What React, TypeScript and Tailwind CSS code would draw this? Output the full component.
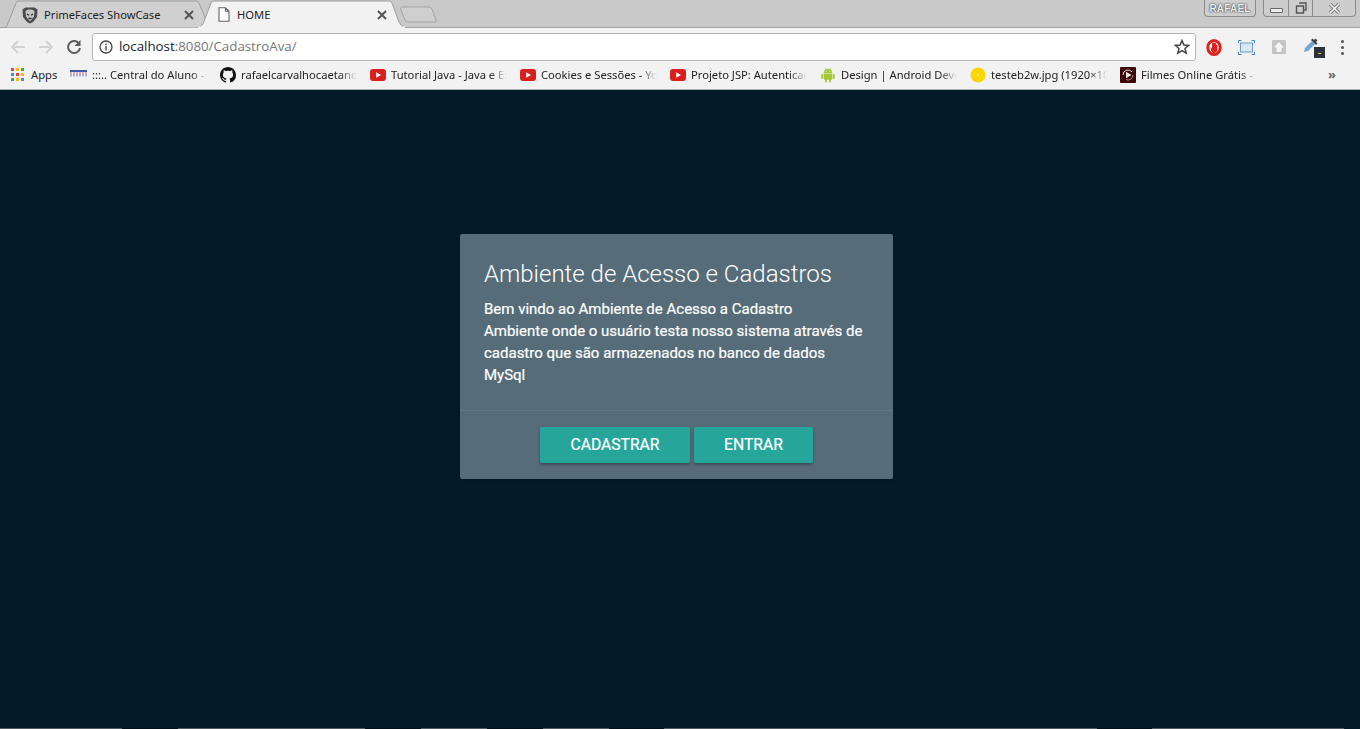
import React from "react";

const YT = () => (
  <svg width="16" height="12" viewBox="0 0 16 12" className="shrink-0">
    <rect x="0" y="0" width="16" height="12" rx="3" fill="#d9201f" />
    <path d="M6.2 3.2 L11 6 L6.2 8.8 Z" fill="#fff" />
  </svg>
);
const GH = () => (
  <svg width="16" height="16" viewBox="0 0 16 16" className="shrink-0">
    <path
      fill="#111"
      d="M8 0C3.58 0 0 3.58 0 8c0 3.54 2.29 6.53 5.47 7.59.4.07.55-.17.55-.38 0-.19-.01-.82-.01-1.49-2.01.37-2.53-.49-2.69-.94-.09-.23-.48-.94-.82-1.13-.28-.15-.68-.52-.01-.53.63-.01 1.08.58 1.23.82.72 1.21 1.87.87 2.33.66.07-.52.28-.87.51-1.07-1.78-.2-3.64-.89-3.64-3.95 0-.87.31-1.59.82-2.15-.08-.2-.36-1.02.08-2.12 0 0 .67-.21 2.2.82.64-.18 1.32-.27 2-.27s1.36.09 2 .27c1.53-1.04 2.2-.82 2.2-.82.44 1.1.16 1.92.08 2.12.51.56.82 1.27.82 2.15 0 3.07-1.87 3.75-3.65 3.95.29.25.54.73.54 1.48 0 1.07-.01 1.93-.01 2.2 0 .21.15.46.55.38A8.01 8.01 0 0 0 16 8c0-4.42-3.58-8-8-8z"
    />
  </svg>
);
const Android = () => (
  <svg width="16" height="16" viewBox="0 0 16 16" className="shrink-0">
    <g fill="#a4c639">
      <path d="M3.6 6.2a4.4 4.4 0 0 1 8.8 0z" />
      <rect x="3.6" y="6.8" width="8.8" height="6" rx="0.8" />
      <rect x="1.2" y="6.8" width="1.8" height="5" rx="0.9" />
      <rect x="13" y="6.8" width="1.8" height="5" rx="0.9" />
      <rect x="5" y="11.5" width="1.9" height="4" rx="0.9" />
      <rect x="9.1" y="11.5" width="1.9" height="4" rx="0.9" />
      <path d="M5 .6 6.4 2.6M11 .6 9.6 2.6" stroke="#a4c639" strokeWidth="0.7" />
    </g>
    <circle cx="6.2" cy="4.2" r="0.5" fill="#fff" />
    <circle cx="9.8" cy="4.2" r="0.5" fill="#fff" />
  </svg>
);
const Yellow = () => (
  <svg width="16" height="16" viewBox="0 0 16 16" className="shrink-0">
    <circle cx="8" cy="8" r="7.5" fill="#ffd500" />
    <circle cx="8" cy="8" r="1" fill="#fff3a0" />
  </svg>
);
const Film = () => (
  <svg width="16" height="16" viewBox="0 0 16 16" className="shrink-0">
    <rect width="16" height="16" rx="1" fill="#3c0508" />
    <path d="M3 8a5 5 0 0 1 9-3" stroke="#f0e4e0" strokeWidth="1" fill="none" />
    <path d="M13 8a5 5 0 0 1-7 4.6" stroke="#b88" strokeWidth="1" fill="none" />
    <path d="M6 4.8 11.5 8 6 11.2Z" fill="#f5ecea" />
  </svg>
);
const Flag = () => (
  <svg width="17" height="9" viewBox="0 0 17 9" className="shrink-0 self-start mt-[3px]">
    <rect width="17" height="2" fill="#3b5ca8" />
    <path d="M0 3h17M0 5h17" stroke="#c9475a" strokeDasharray="2 1" strokeWidth="1" opacity="0.8" />
    <path d="M0 4h17M0 6h17" stroke="#8da0d4" strokeDasharray="2 1" strokeWidth="1" opacity="0.7" />
  </svg>
);

const bookmarks: { icon: React.ReactNode; text: string }[] = [
  { icon: <Flag />, text: ":::.. Central do Aluno - Universidade" },
  { icon: <GH />, text: "rafaelcarvalhocaetano" },
  { icon: <YT />, text: "Tutorial Java - Java e Ext" },
  { icon: <YT />, text: "Cookies e Sessões - YouTube" },
  { icon: <YT />, text: "Projeto JSP: Autenticação" },
  { icon: <Android />, text: "Design | Android Developers" },
  { icon: <Yellow />, text: "testeb2w.jpg (1920×1080)" },
  { icon: <Film />, text: "Filmes Online Grátis - Assistir" },
];

const segs = [
  "w-[122px] bg-[#4f5a62]",
  "w-[56px] bg-[#03101a]",
  "w-[187px] bg-[#4f5a62]",
  "w-[56px] bg-[#03101a]",
  "w-[66px] bg-[#4f5a62]",
  "w-[56px] bg-[#03101a]",
  "w-[66px] bg-[#4f5a62]",
  "w-[55px] bg-[#03101a]",
  "w-[433px] bg-[#4f5a62]",
  "w-[55px] bg-[#03101a]",
  "w-[192px] bg-[#4f5a62]",
];

const CloseX = () => (
  <svg width="10" height="10" viewBox="0 0 10 10" className="shrink-0">
    <path d="M1 1 9 9M9 1 1 9" stroke="#555" strokeWidth="2" />
  </svg>
);

const Shield = () => (
  <svg width="16" height="17" viewBox="0 0 16 17" className="shrink-0">
    <path d="M.5 2.500 3.500 .5h9l3 2-.5 7.500L11 15l-3 1.500L5 15 1 10z" fill="#4a4a4a" />
    <path d="M3.500 4 6 2.500h4L12.500 4l-.5 5.500L8 14.500 4 9.500z" fill="#c4c4c4" />
    <path d="M5 7 7 8.300M11 7 9 8.300M6.500 11.500h3" stroke="#333" strokeWidth="1.300" />
  </svg>
);
const PageIcon = () => (
  <svg width="12" height="15" viewBox="0 0 12 15" className="shrink-0">
    <path d="M1 .8h6.500L11 4.300V14.200H1z M7.500 .8V4.300H11" fill="#fff" stroke="#5f6368" strokeWidth="1.100" />
  </svg>
);

export default function App() {
  return (
    <div className="flex flex-col h-screen w-full overflow-hidden bg-[#031b29] font-['Noto_Sans','Open_Sans',sans-serif]">
      {/* Tab strip */}
      <div className="relative h-[28px] shrink-0 bg-[#c9c9c9] flex items-center text-[11.2px] text-[#222]">
        <svg className="absolute left-0 top-0" width="1360" height="28" viewBox="0 0 1360 28">
          <path d="M0 27.500H1360" stroke="#a3a3a3" />
          <path d="M6 28 16 3Q17 1 19 1H196Q198 1 199 3L206 20 211 28Z" fill="#d0d0d0" stroke="#9d9d9d" />
          <path d="M402 7H429Q431 7 432 9L436 20Q437 22 434 22H408Q406 22 405 20L401 10Q400 7 402 7Z" fill="#cfcfcf" stroke="#a3a3a3" />
          <path d="M197 28Q201 27 203 24L211 3Q212 1 214 1H389Q391 1 392 3L399 22Q401 27 406 28Z" fill="#f2f2f2" stroke="#9d9d9d" />
          <path d="M198 27.500H405" stroke="#f2f2f2" strokeWidth="2" />
        </svg>
        <div className="relative flex items-center w-[172px] ml-[22px] mt-[2px]">
          <Shield />
          <span className="ml-[6px] flex-1">PrimeFaces ShowCase</span>
          <CloseX />
        </div>
        <div className="relative flex items-center w-[169px] ml-[24px] mt-[2px]">
          <PageIcon />
          <span className="ml-[7px] flex-1">HOME</span>
          <CloseX />
        </div>
        <div className="relative ml-auto self-start flex mr-[4px] h-[17px]">
          <div className="w-[52px] h-[17px] rounded-b-[4px] border border-t-0 border-[#8c8c8c] bg-[#cdcdcd] flex items-center justify-center text-[10px] font-bold tracking-[0.2px] text-[#f0f0f0] [text-shadow:0_0_1px_#222,0_0_2px_#444] font-['Liberation_Sans',sans-serif]">
            RAFAEL
          </div>
          <div className="ml-[7px] w-[93px] h-[17px] rounded-b-[4px] border border-t-0 border-[#8c8c8c] bg-[#cdcdcd] flex">
            <div className="w-[25px] flex items-center justify-center border-r border-[#8c8c8c]">
              <div className="w-[13px] h-[5px] mt-[5px] rounded-[1px] border border-[#666] bg-[#eee]" />
            </div>
            <div className="w-[24px] flex items-center justify-center border-r border-[#8c8c8c]">
              <svg width="12" height="12" viewBox="0 0 12 12">
                <path d="M4 1h7v7H8.500M1.500 4h7v7h-7z" fill="none" stroke="#555" strokeWidth="1.400" />
              </svg>
            </div>
            <div className="flex-1 flex items-center justify-center">
              <svg width="13" height="11" viewBox="0 0 13 11">
                <path d="M2 1 11 10M11 1 2 10" stroke="#777" strokeWidth="3.400" />
                <path d="M2 1 11 10M11 1 2 10" stroke="#f5f5f5" strokeWidth="1.600" />
              </svg>
            </div>
          </div>
        </div>
      </div>

      {/* Toolbar */}
      <div className="h-[34px] shrink-0 bg-[#f2f2f2] flex items-center pt-[4px]">
        <div className="w-[92px] shrink-0 flex items-center pl-[10px]">
          <svg width="16" height="16" viewBox="0 0 16 16">
            <path d="M15 8H2M8 2 2 8l6 6" fill="none" stroke="#d3d3d3" strokeWidth="2" />
          </svg>
          <svg width="16" height="16" viewBox="0 0 16 16" className="ml-[12px]">
            <path d="M1 8h13M8 2l6 6-6 6" fill="none" stroke="#d3d3d3" strokeWidth="2" />
          </svg>
          <svg width="16" height="16" viewBox="0 0 16 16" className="ml-[12px]">
            <path d="M13.300 5A6 6 0 1 0 14 9" fill="none" stroke="#5a5a5a" strokeWidth="2" />
            <path d="M14.500 1v6h-6z" fill="#5a5a5a" />
          </svg>
        </div>
        <div className="w-[1104px] h-[28px] shrink-0 bg-white border border-[#b5b5b5] rounded-[3px] flex items-center pl-[6px] pr-[5px]">
          <svg width="14" height="14" viewBox="0 0 14 14" className="shrink-0">
            <circle cx="7" cy="7" r="6" fill="none" stroke="#444" strokeWidth="1.300" />
            <rect x="6.300" y="6" width="1.400" height="4.500" fill="#444" />
            <rect x="6.300" y="3.500" width="1.400" height="1.500" fill="#444" />
          </svg>
          <span className="ml-[6px] text-[13.3px] leading-none text-[#222] font-['Open_Sans',sans-serif]">
            localhost<span className="text-[#777]">:8080/CadastroAva/</span>
          </span>
          <svg width="16" height="16" viewBox="0 0 16 16" className="ml-auto">
            <path d="M8 1.500 9.900 6l4.800.4-3.700 3.100 1.200 4.700L8 11.700l-4.200 2.500L5 9.500 1.300 6.400 6.100 6z" fill="none" stroke="#444" strokeWidth="1.500" />
          </svg>
        </div>
        <div className="flex-1 flex items-center">
          <svg width="16" height="17" viewBox="0 0 16 17" className="ml-[10px]">
            <ellipse cx="8" cy="8.500" rx="6.200" ry="7" fill="#fff" stroke="#e0201c" strokeWidth="3" />
            <path d="M4.500 8 6 9.500V4.500c0-1 1-1 1 0 0-1.300 1.500-1.300 1.500 0 0-1 1.500-1 1.500 0V6c0-.8 1.300-.8 1.300 0v4.500c0 2-1.500 3.500-3.300 3.500S6 13 5 11.500z" fill="#e0201c" />
          </svg>
          <svg width="17" height="15" viewBox="0 0 17 15" className="ml-[16px]">
            <rect x="2.500" y="3" width="12" height="9" fill="#dbe7f3" stroke="#6c9bcb" />
            <path d="M.5 3V.5H3.500M13.500.5H16.500V3M.5 12V14.500H3.500M13.500 14.500H16.500V12" fill="none" stroke="#3d86c6" />
          </svg>
          <svg width="14" height="14" viewBox="0 0 14 14" className="ml-[17px]">
            <rect width="14" height="14" rx="1" fill="#c4c4c4" />
            <path d="M7 2 12 7.500H9.500V12h-5V7.500H2z" fill="#f5f5f5" />
          </svg>
          <div className="relative ml-[17px] w-[22px] h-[21px] shrink-0">
            <svg width="16" height="16" viewBox="0 0 16 16" className="absolute left-0 top-0">
              <path d="M1 15 2 11 9 4l3 3-7 7z" fill="#6aa8d8" />
              <path d="M8 3l5 5 1.500-1.500L13 5l1.500-1.500-2-2L11 3 9.500 1.500z" fill="#444" />
            </svg>
            <div className="absolute left-[11px] top-[10px] w-[11px] h-[11px] bg-[#2b3238] flex items-center justify-center">
              <div className="w-[3px] h-[1px] mt-[2px] bg-[#d7c060]" />
            </div>
          </div>
          <div className="ml-[16px] flex flex-col gap-[3px]">
            <div className="w-[3px] h-[3px] rounded-full bg-[#555]" />
            <div className="w-[3px] h-[3px] rounded-full bg-[#555]" />
            <div className="w-[3px] h-[3px] rounded-full bg-[#555]" />
          </div>
        </div>
      </div>

      {/* Bookmarks */}
      <div className="h-[27px] shrink-0 pb-[1px] bg-[#f2f2f2] flex items-center text-[11.2px] text-[#222]">
        <div className="w-[70px] shrink-0 flex items-center pl-[11px]">
          <div className="grid grid-cols-3 gap-[2px] w-[13px] shrink-0">
            {["#e8453c", "#fbbc05", "#34a853", "#4285f4", "#e8453c", "#fbbc05", "#34a853", "#fbbc05", "#4285f4"].map((c, i) => (
              <div key={i} className="w-[3px] h-[3px]" style={{ backgroundColor: c }} />
            ))}
          </div>
          <span className="ml-[7px]">Apps</span>
        </div>
        {bookmarks.map((b, i) => (
          <div key={i} className="w-[150px] shrink-0 flex items-center">
            {b.icon}
            <span className="ml-[5px] w-[116px] overflow-hidden whitespace-nowrap [mask-image:linear-gradient(to_right,black_85%,transparent)]">
              {b.text}
            </span>
          </div>
        ))}
        <span className="ml-[58px] text-[13px] font-bold text-[#666]">»</span>
      </div>
      <div className="h-[1px] shrink-0 bg-[#a8acae]" />

      {/* Page */}
      <div className="flex-1 flex flex-col min-h-0">
        <div className="flex-1 pt-[144px]">
          <div className="w-[433px] h-[245px] mx-[460px] flex flex-col rounded-[2px] bg-[#566d79] text-white font-['Roboto',sans-serif] shadow-[0_2px_2px_rgba(0,0,0,0.14)]">
            <div className="h-[177px] px-[24px] pt-[24px] border-b border-[#62777f]">
              <h1 className="text-[24px] font-light leading-[32px] mb-[8px]">Ambiente de Acesso e Cadastros</h1>
              <p className="text-[15px] leading-[22px] w-[385px] [-webkit-text-stroke:0.2px_white]">
                Bem vindo ao Ambiente de Acesso a Cadastro
                <br />
                Ambiente onde o usuário testa nosso sistema através de cadastro que são armazenados no banco de dados
                <br />
                MySql
              </p>
            </div>
            <div className="flex justify-center gap-[4px] pt-[16px]">
              <button className="w-[150px] h-[36px] rounded-[2px] bg-[#26a69a] text-[15.7px] font-normal uppercase text-white [-webkit-text-stroke:0.2px_white] shadow-[0_2px_3px_rgba(0,0,0,0.3)]">
                Cadastrar
              </button>
              <button className="w-[119px] h-[36px] rounded-[2px] bg-[#26a69a] text-[15.7px] font-normal uppercase text-white [-webkit-text-stroke:0.2px_white] shadow-[0_2px_3px_rgba(0,0,0,0.3)]">
                Entrar
              </button>
            </div>
          </div>
        </div>
        <div className="h-[1px] shrink-0 flex">
          {segs.map((s, i) => (
            <div key={i} className={s} />
          ))}
        </div>
      </div>
    </div>
  );
}
